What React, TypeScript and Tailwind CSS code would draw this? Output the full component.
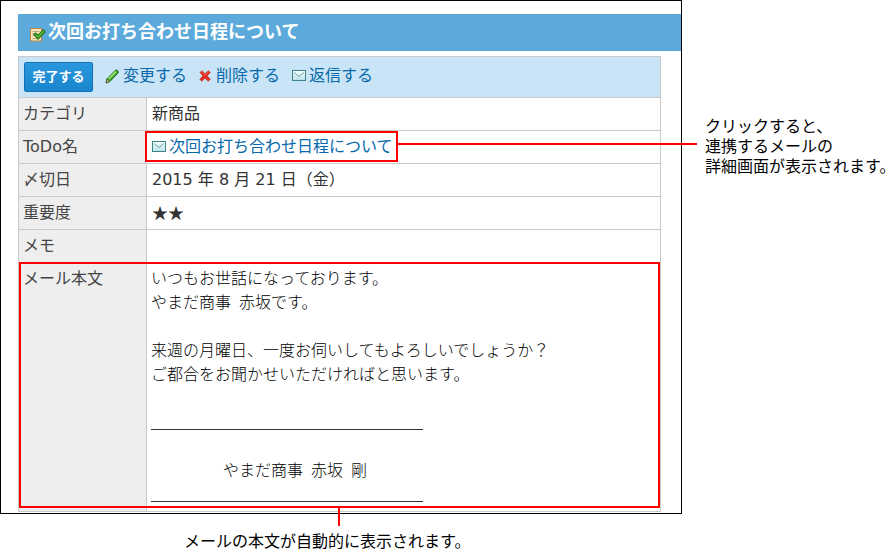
import type { ReactNode } from "react";

const MailIcon = () => (
  <svg width="15" height="12" viewBox="0 0 15 12" className="shrink-0" aria-hidden="true">
    <defs>
      <linearGradient id="mail" x1="0" y1="0" x2="0" y2="1">
        <stop offset="0" stopColor="#fbffff" />
        <stop offset="1" stopColor="#b5e1e8" />
      </linearGradient>
    </defs>
    <rect x="0.5" y="0.5" width="13" height="10" fill="url(#mail)" stroke="#3f8588" />
    <path d="M2 2.5 L7 6.5 L12 2.5" fill="none" stroke="#6aa5a8" />
    <path d="M2 9 L5 6 M12 9 L9 6" fill="none" stroke="#d5eef1" />
  </svg>
);

const TodoIcon = () => (
  <svg width="16" height="16" viewBox="0 0 16 16" className="shrink-0" aria-hidden="true">
    <rect x="0.5" y="1.5" width="11" height="12.5" fill="#fbe5bb" stroke="#b98748" />
    <path d="M2.5 4.5h7M2.5 6.5h3M2.5 8.5h2M2.5 11.5h7" stroke="#b9a27c" />
    <path d="M3.5 7.5 L6 5.8 L8 8 L13.2 2.5 L15.5 4.8 L8 12.5 Z" fill="#3f9a24" stroke="#256f1b" />
    <path d="M5.5 7.3 L8 9.8 L13.5 4.2" fill="none" stroke="#6fbe48" />
  </svg>
);

const PencilIcon = () => (
  <svg width="15" height="15" viewBox="0 0 15 15" className="shrink-0" aria-hidden="true">
    <path d="M1 14 L2 9.8 L10.3 1.4 Q11.4 0.5 12.5 1.5 Q13.9 2.8 13 4 L5 12.4 Z" fill="#43a832" stroke="#23651c" />
    <path d="M3.6 9.8 L10.8 2.6" stroke="#a4e47c" strokeWidth="1.6" />
    <path d="M1 14 L2 10.6 L4.4 12.8 Z" fill="#e6cf9a" stroke="#3b4a27" strokeWidth="0.6" />
  </svg>
);

const DeleteIcon = () => (
  <svg width="12" height="12" viewBox="0 0 12 12" className="shrink-0" aria-hidden="true">
    <path
      d="M1 2.4 L3 0.8 L6 3.7 L9.3 0.7 L11.3 2.5 L8.2 5.8 L11.3 9.2 L9.3 11.3 L6 8.2 L2.8 11.3 L0.8 9.3 L3.8 5.9 Z"
      fill="#e8291d"
      stroke="#c33a2e"
      strokeWidth="0.7"
    />
    <path d="M2.5 2 L6 5.2 L9.5 2" fill="none" stroke="#f4705f" strokeWidth="0.8" />
  </svg>
);

function Row({ label, children }: { label: string; children?: ReactNode }) {
  return (
    <tr>
      <th
        scope="row"
        className="h-[33px] border-r border-b border-[#c9c9c9] bg-[#eee] px-1 text-left font-normal text-[#444]"
      >
        {label}
      </th>
      <td className="h-[33px] border-r border-b border-[#c9c9c9] pl-[5px]">{children}</td>
    </tr>
  );
}

export default function App() {
  return (
    <div className="overflow-hidden bg-white font-['DejaVu_Sans','Noto_Sans_CJK_JP',sans-serif] text-base text-[#333]">
      <div className="flex items-start">
        <main className="flex-1 border border-black pt-[13px] pb-px pl-[17px]">
          {/* Title bar */}
          <h1 className="flex h-[37px] items-center bg-[#5caadb] pb-0.5 pl-3 text-lg leading-6 font-bold text-white">
            <span className="pt-1.5 pr-0.5">
              <TodoIcon />
            </span>
            次回お打ち合わせ日程について
          </h1>

          <div className="mt-[5px] mr-5">
            {/* Actions */}
            <div className="flex h-[41px] items-center border border-b-0 border-[#c9c9c9] bg-[#c9e4f6] pl-[5px] leading-6 text-[#0669ab]">
              <button
                type="button"
                className="h-[30px] w-[69px] rounded-xs border border-[#1272b4] bg-linear-to-b from-[#2b97de] to-[#1785cd] text-[13px] font-bold text-white"
              >
                完了する
              </button>
              <div className="flex items-center gap-3 pb-0.5 pl-3">
                <a href="#edit" className="flex items-center gap-[3px]">
                  <PencilIcon />
                  変更する
                </a>
                <a href="#delete" className="flex items-center gap-[5px]">
                  <DeleteIcon />
                  削除する
                </a>
                <a href="#reply" className="flex items-center gap-0.5">
                  <MailIcon />
                  返信する
                </a>
              </div>
            </div>

            {/* Details */}
            <table className="w-full border-separate border-spacing-0 border-t border-l border-[#c9c9c9] leading-6">
              <colgroup>
                <col className="w-32" />
                <col />
              </colgroup>
              <tbody>
                <Row label="カテゴリ">新商品</Row>
                <Row label="ToDo名">
                  <div className="-mr-[37px] -ml-[7px] flex h-8 items-start">
                    <a
                      href="#mail"
                      className="flex h-[31px] items-center gap-0.5 border-2 border-[#f00] pr-[3px] pl-[5px] whitespace-nowrap text-[#0669ab]"
                    >
                      <MailIcon />
                      次回お打ち合わせ日程について
                    </a>
                    <div className="mt-3 h-0.5 flex-1 bg-[#f00]" />
                  </div>
                </Row>
                <Row label="〆切日">2015 年 8 月 21 日（金）</Row>
                <Row label="重要度">
                  <span className="font-['Noto_Sans_CJK_JP',sans-serif]">★★</span>
                </Row>
                <Row label="メモ" />
                <tr className="relative">
                  <th
                    scope="row"
                    className="border-r border-b border-[#c9c9c9] bg-[#eee] px-1 pt-1 text-left align-top font-normal text-[#444]"
                  >
                    メール本文
                  </th>
                  <td className="border-r border-b border-[#c9c9c9] pt-0.5 pb-[5px] pl-1 font-['Noto_Sans_CJK_JP',sans-serif] font-light text-black">
                    <p>いつもお世話になっております。</p>
                    <p>やまだ商事&ensp;赤坂です。</p>
                    <p className="mt-6">来週の月曜日、一度お伺いしてもよろしいでしょうか？</p>
                    <p>ご都合をお聞かせいただければと思います。</p>
                    <hr className="mt-11 w-[272px] border-[#333]" />
                    <p className="mt-[27px] pl-[72px]">やまだ商事&ensp;赤坂&ensp;剛</p>
                    <hr className="mt-5 mb-1 w-[272px] border-[#333]" />
                    {/* Highlight and its pointer */}
                    <div className="absolute -top-px right-px bottom-1 left-0 border-2 border-[#f00]">
                      <div className="absolute top-full left-1/2 -ml-0.5 h-5 w-0.5 bg-[#f00]" />
                    </div>
                  </td>
                </tr>
              </tbody>
            </table>
          </div>
        </main>

        <p className="w-[205px] pt-[117px] pl-[23px] leading-5 whitespace-nowrap text-black">
          クリックすると、
          <br />
          連携するメールの
          <br />
          詳細画面が表示されます。
        </p>
      </div>

      <p className="mt-[21px] pl-[184px] leading-[14px] text-black">メールの本文が自動的に表示されます。</p>
    </div>
  );
}
